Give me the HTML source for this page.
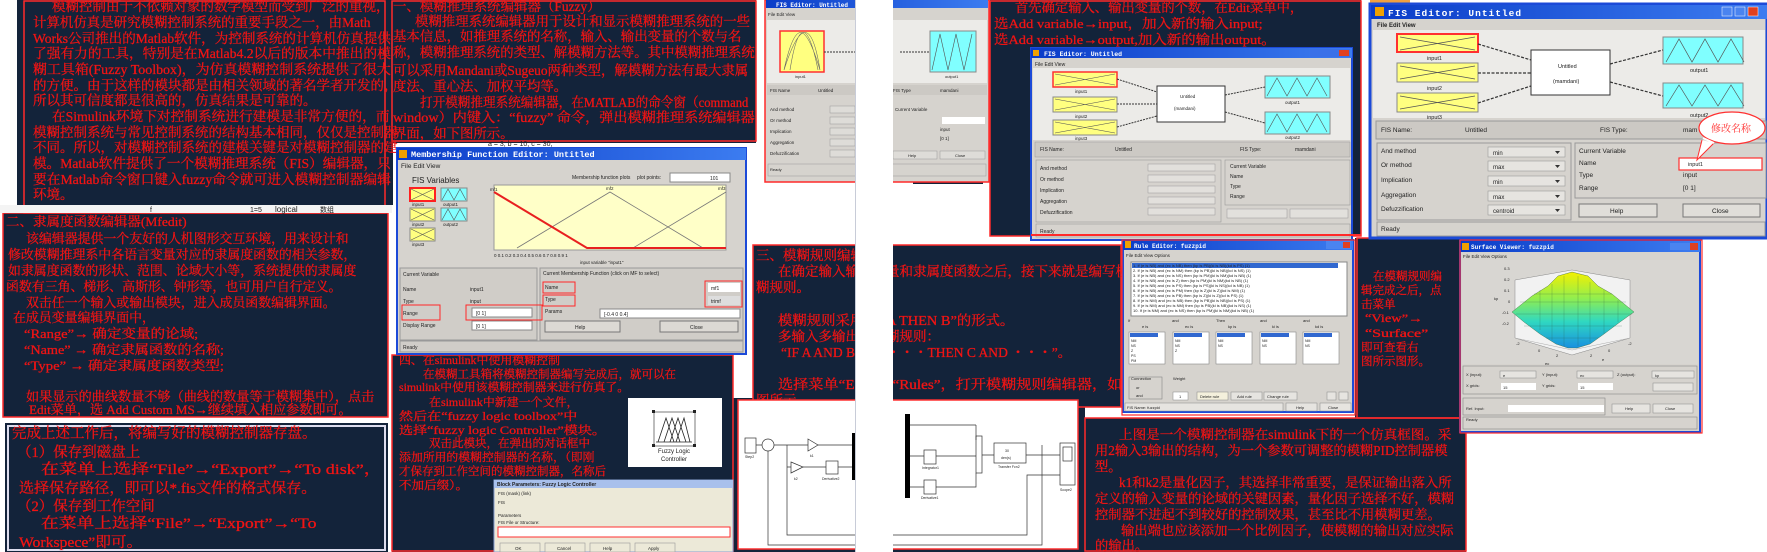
<!DOCTYPE html>
<html><head><meta charset="utf-8"><style>
html,body{margin:0;padding:0;background:#fff;width:1767px;height:552px;overflow:hidden}
svg{display:block}
.r text{fill:#f01414;stroke:#f01414;stroke-width:.3;font-family:"Liberation Serif","Noto Serif CJK SC",serif}
.w text{font-family:"Liberation Sans",sans-serif;fill:#222}
.tt{fill:#fff !important;font-family:"Liberation Mono",monospace !important;font-weight:bold}
</style></head><body>
<svg width="1767" height="552" viewBox="0 0 1767 552" xmlns="http://www.w3.org/2000/svg">
<defs>
<linearGradient id="tb" x1="0" x2="1"><stop offset="0" stop-color="#0a3cc8"/><stop offset="1" stop-color="#3c7cf0"/></linearGradient>
<linearGradient id="sf" x1="0" y1="0" x2="0" y2="1"><stop offset="0" stop-color="#f4f000"/><stop offset="0.35" stop-color="#90ee50"/><stop offset="0.65" stop-color="#30d8c0"/><stop offset="1" stop-color="#1890e0"/></linearGradient>
</defs>
<rect width="1767" height="552" fill="#fff"/>
<g fill="#13233a">
<rect x="17" y="0" width="376" height="205"/>
<rect x="392" y="0" width="364" height="143"/>
<rect x="3" y="213" width="385" height="204"/>
<rect x="5" y="423" width="383" height="129"/>
<rect x="392" y="355" width="341" height="197"/>
<rect x="990" y="0" width="371" height="236"/>
<rect x="753" y="245" width="368" height="162"/>
<rect x="733" y="398" width="352" height="154"/>
<rect x="1355" y="238" width="107" height="180"/>
<rect x="1085" y="418" width="381" height="134"/>
<rect x="913" y="170" width="70" height="14"/>
</g>
<rect x="8" y="426" width="377" height="124" fill="none" stroke="#dde" stroke-width="2"/>
<g fill="none" stroke="#ff2a2a" stroke-width="1.5">
<rect x="24" y="1" width="361" height="212"/>
<rect x="392" y="1" width="364" height="140"/>
<rect x="3" y="213" width="385" height="204"/>
<rect x="392" y="355" width="341" height="196"/>
<rect x="990" y="1" width="371" height="235"/>
<rect x="753" y="245" width="368" height="162"/>
<rect x="1357" y="238" width="106" height="180"/>
<rect x="1085" y="418" width="381" height="133"/>
</g>
<g class="w"><rect x="0" y="205" width="392" height="8" fill="#f4f4f4"/>
<text x="150" y="212" font-size="7" fill="#666">f</text><text x="250" y="212" font-size="7" fill="#666">1=5</text><text x="275" y="212" font-size="8" fill="#3030ff" font-family="Liberation Mono">logical</text><text x="320" y="212" font-size="7" fill="#666">数组</text>
<text x="488" y="146" font-size="7" fill="#888">a = 3; b = 10; c = 30;</text></g>

<g class="r" font-size="13.5">
<text class="t" x="52" y="11">模糊控制由于不依赖对象的数学模型而受到广泛的重视，</text>
<text class="t" x="33" y="27">计算机仿真是研究模糊控制系统的重要手段之一，由Math</text>
<text class="t" x="33" y="43">Works公司推出的Matlab软件，为控制系统的计算机仿真提供</text>
<text class="t" x="33" y="58">了强有力的工具，特别是在Matlab4.2以后的版本中推出的模</text>
<text class="t" x="33" y="74">糊工具箱(Fuzzy Toolbox)，为仿真模糊控制系统提供了很大</text>
<text class="t" x="33" y="90">的方便。由于这样的模块都是由相关领域的著名学者开发的，</text>
<text class="t" x="33" y="105">所以其可信度都是很高的，仿真结果是可靠的。</text>
<text class="t" x="52" y="121">在Simulink环境下对控制系统进行建模是非常方便的，而</text>
<text class="t" x="33" y="137">模糊控制系统与常见控制系统的结构基本相同，仅仅是控制器</text>
<text class="t" x="33" y="152">不同。所以，对模糊控制系统的建模关键是对模糊控制器的建</text>
<text class="t" x="33" y="168">模。Matlab软件提供了一个模糊推理系统（FIS）编辑器，只</text>
<text class="t" x="33" y="184">要在Matlab命令窗口键入fuzzy命令就可进入模糊控制器编辑</text>
<text class="t" x="33" y="199">环境。</text>
</g>
<g class="r" font-size="13.4">
<text class="t" x="393" y="11">一、模糊推理系统编辑器（Fuzzy）</text>
<text class="t" x="415" y="26">模糊推理系统编辑器用于设计和显示模糊推理系统的一些</text>
<text class="t" x="393" y="41">基本信息，如推理系统的名称，输入、输出变量的个数与名</text>
<text class="t" x="393" y="57">称，模糊推理系统的类型、解模糊方法等。其中模糊推理系统</text>
<text class="t" x="393" y="75">可以采用Mandani或Sugeuo两种类型，解模糊方法有最大隶属</text>
<text class="t" x="393" y="91">度法、重心法、加权平均等。</text>
<text class="t" x="420" y="107">打开模糊推理系统编辑器，在MATLAB的命令窗（command</text>
<text class="t" x="393" y="122">window）内键入：“fuzzy” 命令，弹出模糊推理系统编辑器</text>
<text class="t" x="393" y="138">界面，如下图所示。</text>
</g>
<g class="r" font-size="12.9">
<text class="t" x="6" y="226">二、隶属度函数编辑器(Mfedit)</text>
<text class="t" x="26" y="243">该编辑器提供一个友好的人机图形交互环境，用来设计和</text>
<text class="t" x="8" y="259">修改模糊推理系中各语言变量对应的隶属度函数的相关参数，</text>
<text class="t" x="8" y="275">如隶属度函数的形状、范围、论域大小等，系统提供的隶属度</text>
<text class="t" x="6" y="291">函数有三角、梯形、高斯形、钟形等，也可用户自行定义。</text>
<text class="t" x="26" y="307">双击任一个输入或输出模块，进入成员函数编辑界面。</text>
<text class="t" x="13" y="322">在成员变量编辑界面中，</text>
<text class="t" x="24" y="338">“Range”→ 确定变量的论域;</text>
<text class="t" x="24" y="354">“Name” → 确定隶属函数的名称;</text>
<text class="t" x="24" y="370">“Type” → 确定隶属度函数类型;</text>
<text class="t" x="26" y="401">如果显示的曲线数量不够（曲线的数量等于模糊集中），点击</text>
<text class="t" x="29" y="414">Edit菜单，选 Add Custom MS→继续填入相应参数即可。</text>
</g>
<g class="r" font-size="14.5">
<text class="t" x="12" y="438">完成上述工作后，将编写好的模糊控制器存盘。</text>
<text class="t" x="17" y="457">（1）保存到磁盘上</text>
<text class="t" x="41" y="474">在菜单上选择“File”→“Export”→“To disk”，</text>
<text class="t" x="19" y="493">选择保存路径，即可以*.fis文件的格式保存。</text>
<text class="t" x="17" y="511">（2）保存到工作空间</text>
<text class="t" x="41" y="528">在菜单上选择“File”→“Export”→“To</text>
<text class="t" x="19" y="547">Workspece”即可。</text>
</g>
<g class="r" font-size="11.5">
<text class="t" x="399" y="364">四、在simulink中使用模糊控制</text>
<text class="t" x="423" y="378">在模糊工具箱将模糊控制器编写完成后，就可以在</text>
<text class="t" x="399" y="391">simulink中使用该模糊控制器来进行仿真了。</text>
<text class="t" x="429" y="406">在simulink中新建一个文件，</text>
<text class="t" x="399" y="420">然后在“fuzzy logic toolbox”中</text>
<text class="t" x="399" y="434">选择“fuzzy logic Controller”模块。</text>
<text class="t" x="429" y="447">双击此模块，在弹出的对话框中</text>
<text class="t" x="399" y="461">添加所用的模糊控制器的名称，（即刚</text>
<text class="t" x="399" y="475">才保存到工作空间的模糊控制器，名称后</text>
<text class="t" x="399" y="489">不加后缀）。</text>
</g>
<g class="r" font-size="13.1">
<text class="t" x="1015" y="12">首先确定输入、输出变量的个数，在Edit菜单中，</text>
<text class="t" x="994" y="28">选Add variable→input，加入新的输入input;</text>
<text class="t" x="994" y="44">选Add variable→output,加入新的输出output。</text>
</g>
<g class="r" font-size="13.5">
<text class="t" x="756" y="260">三、模糊规则编辑器</text>
<text class="t" x="778" y="276">在确定输入输出变量和隶属度函数之后，接下来就是编写模</text>
<text class="t" x="756" y="292">糊规则。</text>
<text class="t" x="778" y="325">模糊规则采用“IF A THEN B”的形式。</text>
<text class="t" x="778" y="341">多输入多输出的模糊规则：</text>
<text class="t" x="781" y="357">“IF A AND B AND・・・THEN C AND ・・・”。</text>
<text class="t" x="778" y="389">选择菜单“Edit”→“Rules”，打开模糊规则编辑器，如</text>
<text class="t" x="756" y="405">图所示。</text>
</g>
<g class="r" font-size="11.5">
<text class="t" x="1373" y="280">在模糊规则编</text>
<text class="t" x="1361" y="294">辑完成之后，点</text>
<text class="t" x="1361" y="308">击菜单</text>
<text class="t" x="1365" y="322">“View”→</text>
<text class="t" x="1365" y="337">“Surface”</text>
<text class="t" x="1361" y="351">即可查看右</text>
<text class="t" x="1361" y="365">图所示图形。</text>
</g>
<g class="r" font-size="13.3">
<text class="t" x="1119" y="439">上图是一个模糊控制器在simulink下的一个仿真框图。采</text>
<text class="t" x="1095" y="455">用2输入3输出的结构，为一个参数可调整的模糊PID控制器模</text>
<text class="t" x="1095" y="471">型。</text>
<text class="t" x="1119" y="487">k1和k2是量化因子，其选择非常重要，是保证输出落入所</text>
<text class="t" x="1095" y="503">定义的输入变量的论域的关键因素，量化因子选择不好，模糊</text>
<text class="t" x="1095" y="519">控制器不进起不到较好的控制效果，甚至比不用模糊更差。</text>
<text class="t" x="1121" y="535">输出端也应该添加一个比例因子，使模糊的输出对应实际</text>
<text class="t" x="1095" y="550">的输出。</text>
</g>

<g class="w">
<rect x="397" y="148" width="349" height="206" fill="#d6d3ce" stroke="#1c4ad8" stroke-width="2"/>
<rect x="397" y="148" width="349" height="12" fill="url(#tb)"/>
<rect x="399" y="150" width="8" height="8" fill="#f0a000"/>
<text class="tt" x="411" y="157" font-size="8.5">Membership Function Editor: Untitled</text>
<text x="401" y="168" font-size="6.5" font-family="Liberation Mono">File  Edit  View</text>
<text x="412" y="183" font-size="8" fill="#444">FIS Variables</text>
<rect x="410" y="188" width="25" height="13" fill="#ffff80" stroke="#ff2020" stroke-width="2"/>
<rect x="441" y="188" width="26" height="13" fill="#80ffff" stroke="#888"/>
<rect x="410" y="208" width="25" height="13" fill="#ffff80" stroke="#888"/>
<rect x="441" y="208" width="26" height="13" fill="#80ffff" stroke="#888"/>
<rect x="410" y="228" width="25" height="13" fill="#ffff80" stroke="#888"/>
<path d="M411 189l23 11M411 200l23-11M442 200l6-11 6 11 6-11 6 11M411 209l23 11M411 220l23-11M442 220l6-11 6 11 6-11 6 11M411 229l23 11M411 240l23-11" stroke="#555" stroke-width=".6" fill="none"/>
<g font-size="4.5" fill="#555"><text x="412" y="206">input1</text><text x="443" y="206">output1</text><text x="412" y="226">input2</text><text x="443" y="226">output2</text><text x="412" y="246">input3</text></g>
<text x="572" y="179" font-size="5" fill="#444">Membership function plots</text>
<text x="637" y="179" font-size="5" fill="#444">plot points:</text>
<rect x="670" y="173" width="60" height="9" fill="#fff" stroke="#888"/><text x="710" y="180" font-size="5">101</text>
<rect x="494" y="185" width="232" height="65" fill="#ffffc8" stroke="#999"/>
<path d="M517 248L610 192L703 248M633 248L726 192" stroke="#777" stroke-width=".8" fill="none"/>
<path d="M494 192L587 248L726 248" stroke="#e82020" stroke-width="2" fill="none"/>
<g font-size="4.5" fill="#c00"><text x="490" y="191">mf1</text></g><g font-size="4.5" fill="#555"><text x="606" y="190">mf2</text><text x="718" y="190">mf3</text>
<text x="494" y="257">0   0.1   0.2   0.3   0.4   0.5   0.6   0.7   0.8   0.9   1</text>
<text x="580" y="264">input variable "input1"</text></g>
<rect x="400" y="268" width="137" height="72" fill="#d0cdc8" stroke="#999"/>
<rect x="540" y="268" width="203" height="72" fill="#d0cdc8" stroke="#999"/>
<g font-size="5" fill="#444"><text x="403" y="276">Current Variable</text><text x="403" y="291">Name</text><text x="470" y="291">input1</text><text x="403" y="303">Type</text><text x="470" y="303">input</text><text x="403" y="315">Range</text><text x="403" y="327">Display Range</text>
<text x="543" y="275">Current Membership Function (click on MF to select)</text><text x="545" y="289">Name</text><text x="545" y="301">Type</text><text x="545" y="313">Params</text></g>
<rect x="472" y="308" width="60" height="9" fill="#fff" stroke="#888"/><text x="476" y="315" font-size="5">[0 1]</text>
<rect x="472" y="321" width="60" height="9" fill="#fff" stroke="#888"/><text x="476" y="328" font-size="5">[0 1]</text>
<rect x="600" y="309" width="140" height="9" fill="#fff" stroke="#888"/><text x="604" y="316" font-size="5">[-0.4 0 0.4]</text>
<rect x="708" y="283" width="32" height="9" fill="#fff"/><text x="711" y="290" font-size="5">mf1</text>
<rect x="708" y="296" width="32" height="9" fill="#ddd"/><text x="711" y="303" font-size="5">trimf</text>
<g fill="none" stroke="#ff2828" stroke-width="1"><rect x="402" y="305" width="38" height="15"/><rect x="466" y="305" width="76" height="15"/><rect x="543" y="282" width="32" height="11"/><rect x="543" y="295" width="32" height="11"/><rect x="705" y="281" width="37" height="26"/></g>
<rect x="545" y="321" width="75" height="11" fill="#dcd9d4" stroke="#777"/><text x="575" y="329" font-size="5">Help</text>
<rect x="660" y="321" width="78" height="11" fill="#dcd9d4" stroke="#777"/><text x="690" y="329" font-size="5">Close</text>
<rect x="400" y="341" width="343" height="11" fill="#d0cdc8" stroke="#999"/><text x="403" y="349" font-size="5">Ready</text>
</g>

<g class="w">
<rect x="765" y="0" width="224" height="182" fill="#d6d3ce" stroke="#ff2a2a" stroke-width="1.5"/>
<rect x="766" y="0" width="222" height="8" fill="url(#tb)"/>
<text class="tt" x="776" y="7" font-size="6">FIS Editor: Untitled</text>
<text x="768" y="16" font-size="4.5" font-family="Liberation Mono">File  Edit  View</text>
<rect x="767" y="20" width="220" height="63" fill="#ecebe8"/>
<rect x="780" y="31" width="44" height="41" fill="#ffff80" stroke="#ff3030" stroke-width="1.5"/>
<path d="M784 70C795 20 805 20 820 70M784 70C800 20 812 20 820 70M790 70C798 20 808 20 818 70" stroke="#666" stroke-width=".6" fill="none"/>
<text x="795" y="78" font-size="4" fill="#d44">input1</text>
<path d="M824 52H855M900 52H930" stroke="#333" stroke-dasharray="2 1"/>
<rect x="930" y="31" width="46" height="41" fill="#80ffff" stroke="#888"/>
<path d="M932 70l8-36 8 36 8-36 8 36 8-36" stroke="#555" stroke-width=".6" fill="none"/>
<text x="945" y="78" font-size="4">output1</text>
<rect x="767" y="85" width="220" height="10" fill="#ccc9c4"/><g font-size="4.5"><text x="770" y="92">FIS Name</text><text x="818" y="92">Untitled</text><text x="893" y="92">FIS Type</text><text x="940" y="92">mamdani</text>
<text x="770" y="111">And method</text><text x="770" y="122">Or method</text><text x="770" y="133">Implication</text><text x="770" y="144">Aggregation</text><text x="770" y="155">Defuzzification</text>
<text x="895" y="111">Current Variable</text><text x="940" y="131">input</text><text x="940" y="140">[0 1]</text></g>
<g fill="#dedcd8" stroke="#999" stroke-width=".5"><rect x="830" y="106" width="25" height="7"/><rect x="830" y="117" width="25" height="7"/><rect x="830" y="128" width="25" height="7"/><rect x="830" y="139" width="25" height="7"/><rect x="830" y="150" width="25" height="7"/><rect x="893" y="151" width="44" height="8"/><rect x="940" y="151" width="45" height="8"/></g>
<rect x="942" y="117" width="43" height="7" fill="#fff"/>
<g font-size="4"><text x="908" y="157">Help</text><text x="955" y="157">Close</text><text x="770" y="171">Ready</text></g>
<rect x="768" y="164" width="218" height="12" fill="none" stroke="#999" stroke-width=".5"/>
</g>

<g class="w">
<rect x="1031" y="48" width="321" height="192" fill="#d6d3ce" stroke="#1c4ad8" stroke-width="2"/>
<rect x="1031" y="48" width="321" height="10" fill="url(#tb)"/>
<rect x="1033" y="50" width="6" height="6" fill="#f0a000"/>
<text class="tt" x="1044" y="56" font-size="6.5">FIS Editor: Untitled</text>
<rect x="1310" y="49" width="40" height="8" fill="#3a70e8"/><rect x="1339" y="50" width="10" height="6" fill="#e04020"/>
<text x="1035" y="66" font-size="5" font-family="Liberation Mono">File  Edit  View</text>
<rect x="1033" y="68" width="317" height="72" fill="#ecebe8"/>
<g stroke="#888"><rect x="1053" y="72" width="64" height="15" fill="#ffff80" stroke="#ff3030" stroke-width="1.5"/><rect x="1053" y="97" width="64" height="15" fill="#ffff80"/><rect x="1053" y="120" width="64" height="15" fill="#ffff80"/>
<rect x="1157" y="86" width="68" height="36" fill="#fff" stroke="#333"/>
<rect x="1265" y="76" width="65" height="22" fill="#80ffff"/><rect x="1265" y="112" width="65" height="22" fill="#80ffff"/></g>
<path d="M1055 74l60 11M1055 85l60-11M1055 99l60 11M1055 110l60-11M1055 122l60 11M1055 133l60-11M1267 96l10-18 10 18 10-18 10 18 10-18 10 18M1267 132l10-18 10 18 10-18 10 18 10-18 10 18" stroke="#555" stroke-width=".6" fill="none"/>
<path d="M1117 79L1157 92M1117 104H1157M1117 127L1157 116M1225 95L1265 87M1225 112L1265 123" stroke="#333" stroke-dasharray="2 1"/>
<g font-size="4.5" fill="#555"><text x="1075" y="93" fill="#d44">input1</text><text x="1075" y="118">input2</text><text x="1075" y="140">input3</text><text x="1180" y="98">Untitled</text><text x="1174" y="110">(mamdani)</text><text x="1285" y="104">output1</text><text x="1285" y="139">output2</text></g>
<rect x="1035" y="142" width="315" height="15" fill="#ccc9c4" stroke="#999" stroke-width=".5"/>
<g font-size="5"><text x="1040" y="151">FIS Name:</text><text x="1115" y="151">Untitled</text><text x="1240" y="151">FIS Type:</text><text x="1295" y="151">mamdani</text>
<text x="1040" y="170">And method</text><text x="1040" y="181">Or method</text><text x="1040" y="192">Implication</text><text x="1040" y="203">Aggregation</text><text x="1040" y="214">Defuzzification</text>
<text x="1230" y="168">Current Variable</text><text x="1230" y="178">Name</text><text x="1230" y="188">Type</text><text x="1230" y="198">Range</text></g>
<rect x="1036" y="160" width="185" height="62" fill="none" stroke="#999" stroke-width=".6"/>
<rect x="1225" y="160" width="125" height="45" fill="none" stroke="#999" stroke-width=".6"/>
<g fill="#e2e0dc" stroke="#999" stroke-width=".5"><rect x="1148" y="164" width="67" height="7"/><rect x="1148" y="175" width="67" height="7"/><rect x="1148" y="186" width="67" height="7"/><rect x="1148" y="197" width="67" height="7"/><rect x="1148" y="208" width="67" height="7"/><rect x="1227" y="209" width="60" height="9"/><rect x="1290" y="209" width="58" height="9"/></g>
<rect x="1036" y="224" width="314" height="13" fill="none" stroke="#999" stroke-width=".6"/><text x="1040" y="233" font-size="5">Ready</text>
</g>
<rect x="1031" y="234" width="330" height="2" fill="#ff2a2a"/>

<g class="w">
<rect x="1370" y="0" width="40" height="6" fill="#f0a040"/>
<rect x="1370" y="4" width="397" height="234" fill="#d6d3ce" stroke="#1c4ad8" stroke-width="3"/>
<rect x="1371" y="5" width="396" height="14" fill="url(#tb)"/>
<rect x="1375" y="7" width="9" height="9" fill="#f0a000"/>
<text class="tt" x="1388" y="16" font-size="9.5" letter-spacing="1">FIS Editor: Untitled</text>
<rect x="1722" y="7" width="10" height="9" fill="#4a84f0" stroke="#fff" stroke-width=".5"/><rect x="1735" y="7" width="10" height="9" fill="#4a84f0" stroke="#fff" stroke-width=".5"/><rect x="1748" y="7" width="10" height="9" fill="#e04020" stroke="#fff" stroke-width=".5"/>
<text x="1377" y="27" font-size="6" font-family="Liberation Mono" font-weight="bold">File  Edit  View</text>
<rect x="1373" y="30" width="392" height="88" fill="#ecebe8"/>
<g stroke="#888"><rect x="1397" y="34" width="81" height="18" fill="#ffff80" stroke="#ff3030" stroke-width="2"/><rect x="1397" y="63" width="81" height="19" fill="#ffff80"/><rect x="1397" y="93" width="81" height="19" fill="#ffff80"/>
<rect x="1531" y="50" width="79" height="45" fill="#fff" stroke="#333"/>
<rect x="1663" y="37" width="80" height="27" fill="#80ffff"/><rect x="1663" y="83" width="80" height="25" fill="#80ffff"/></g>
<path d="M1400 37l75 13M1400 50l75-13M1400 66l75 13M1400 79l75-13M1400 96l75 13M1400 109l75-13M1666 62l13-23 13 23 13-23 13 23 13-23 13 23M1666 106l13-21 13 21 13-21 13 21 13-21 13 21" stroke="#555" stroke-width=".7" fill="none"/>
<path d="M1478 44L1531 60M1478 73H1531M1478 103L1531 86M1610 64L1663 50M1610 82L1663 96" stroke="#333" stroke-dasharray="3 1.5" stroke-width="1.2"/>
<g font-size="5.5" fill="#666"><text x="1427" y="60" fill="#e04040">input1</text><text x="1427" y="90">input2</text><text x="1427" y="119">input3</text><text x="1558" y="68">Untitled</text><text x="1553" y="83">(mamdani)</text><text x="1690" y="72">output1</text><text x="1690" y="117">output2</text></g>
<rect x="1376" y="121" width="390" height="18" fill="#ccc9c4" stroke="#999"/>
<g font-size="6.5" fill="#333"><text x="1381" y="132">FIS Name:</text><text x="1465" y="132">Untitled</text><text x="1600" y="132">FIS Type:</text><text x="1683" y="132">mam</text>
<text x="1381" y="153">And method</text><text x="1381" y="167">Or method</text><text x="1381" y="182">Implication</text><text x="1381" y="197">Aggregation</text><text x="1381" y="211">Defuzzification</text>
<text x="1579" y="153">Current Variable</text><text x="1579" y="165">Name</text><text x="1579" y="177">Type</text><text x="1579" y="190">Range</text><text x="1683" y="177">input</text><text x="1683" y="190">[0 1]</text></g>
<rect x="1377" y="143" width="194" height="77" fill="none" stroke="#999"/>
<rect x="1575" y="143" width="191" height="55" fill="none" stroke="#999"/>
<g fill="#e6e4e0" stroke="#999" stroke-width=".6"><rect x="1488" y="147" width="77" height="10"/><rect x="1488" y="161" width="77" height="10"/><rect x="1488" y="176" width="77" height="10"/><rect x="1488" y="191" width="77" height="10"/><rect x="1488" y="205" width="77" height="10"/></g>
<g font-size="6"><text x="1493" y="155">min</text><text x="1493" y="169">max</text><text x="1493" y="184">min</text><text x="1493" y="199">max</text><text x="1493" y="213">centroid</text></g>
<g fill="#333"><path d="M1555 151h5l-2.5 3z"/><path d="M1555 165h5l-2.5 3z"/><path d="M1555 180h5l-2.5 3z"/><path d="M1555 195h5l-2.5 3z"/><path d="M1555 209h5l-2.5 3z"/></g>
<rect x="1679" y="158" width="83" height="12" fill="#fff" stroke="#ff3030" stroke-width="1.2"/><text x="1688" y="166" font-size="5.5">input1</text>
<rect x="1579" y="204" width="78" height="13" fill="#e0ded9" stroke="#777"/><text x="1610" y="213" font-size="6.5">Help</text>
<rect x="1683" y="204" width="77" height="13" fill="#e0ded9" stroke="#777"/><text x="1712" y="213" font-size="6.5">Close</text>
<rect x="1377" y="222" width="388" height="14" fill="none" stroke="#999"/><text x="1381" y="231" font-size="6.5">Ready</text>
</g>
<path d="M1702 140L1697 160L1714 143" fill="#fff" stroke="#ff3030"/>
<ellipse cx="1732" cy="128" rx="33" ry="16" fill="#fff" stroke="#ff3030" stroke-width="1.2"/>
<path d="M1703 138L1714 143" stroke="#fff" stroke-width="2"/>
<text x="1711" y="132" font-size="10" fill="#ff3030" font-family="Noto Serif CJK SC,serif">修改名称</text>

<g class="w">
<rect x="1123" y="240" width="230" height="172" fill="#d6d3ce" stroke="#1c4ad8" stroke-width="2"/>
<rect x="1123" y="240" width="230" height="10" fill="url(#tb)"/>
<rect x="1125" y="241" width="6" height="7" fill="#f0a000"/>
<text class="tt" x="1134" y="248" font-size="6">Rule Editor: fuzzpid</text>
<rect x="1326" y="241" width="25" height="8" fill="#4a84f0"/><rect x="1343" y="242" width="7" height="6" fill="#e04020"/>
<text x="1126" y="257" font-size="4.5" font-family="Liberation Mono">File  Edit  View  Options</text>
<rect x="1131" y="262" width="216" height="54" fill="#fff" stroke="#888"/>
<rect x="1132" y="263" width="206" height="5" fill="#3168d0"/>
<g font-size="4" fill="#333">
<text x="1133" y="267" fill="#fff">1. If (e is NB) and (ec is NB) then (kp is PB)(ki is NB)(kd is PS) (1)</text>
<text x="1133" y="272">2. If (e is NB) and (ec is NM) then (kp is PB)(ki is NB)(kd is NS) (1)</text>
<text x="1133" y="277">3. If (e is NB) and (ec is NS) then (kp is PM)(ki is NM)(kd is NB) (1)</text>
<text x="1133" y="282">4. If (e is NB) and (ec is Z) then (kp is PM)(ki is NM)(kd is NB) (1)</text>
<text x="1133" y="287">5. If (e is NB) and (ec is PS) then (kp is PS)(ki is NS)(kd is NB) (1)</text>
<text x="1133" y="292">6. If (e is NB) and (ec is PM) then (kp is Z)(ki is Z)(kd is NM) (1)</text>
<text x="1133" y="297">7. If (e is NB) and (ec is PB) then (kp is Z)(ki is Z)(kd is PS) (1)</text>
<text x="1133" y="302">8. If (e is NM) and (ec is NB) then (kp is PB)(ki is NB)(kd is PS) (1)</text>
<text x="1133" y="307">9. If (e is NM) and (ec is NM) then (kp is PB)(ki is NB)(kd is NS) (1)</text>
<text x="1133" y="312">10. If (e is NM) and (ec is NS) then (kp is PM)(ki is NM)(kd is NB) (1)</text>
<text x="1128" y="322">If</text><text x="1172" y="322">and</text><text x="1216" y="322">Then</text><text x="1260" y="322">and</text><text x="1303" y="322">and</text>
<text x="1142" y="328">e is</text><text x="1185" y="328">ec is</text><text x="1228" y="328">kp is</text><text x="1272" y="328">ki is</text><text x="1315" y="328">kd is</text>
</g>
<g fill="#fff" stroke="#888" stroke-width=".6"><rect x="1129" y="332" width="36" height="32"/><rect x="1173" y="332" width="36" height="32"/><rect x="1216" y="332" width="36" height="32"/><rect x="1260" y="332" width="36" height="32"/><rect x="1303" y="332" width="36" height="32"/></g>
<g fill="#3168d0"><rect x="1130" y="333" width="28" height="4"/><rect x="1174" y="333" width="28" height="4"/><rect x="1217" y="333" width="28" height="4"/><rect x="1261" y="333" width="28" height="4"/><rect x="1304" y="333" width="28" height="4"/></g>
<g font-size="3.5" fill="#333"><text x="1131" y="342">NM</text><text x="1131" y="347">NS</text><text x="1131" y="352">Z</text><text x="1131" y="357">PS</text><text x="1131" y="362">PM</text><text x="1175" y="342">NM</text><text x="1175" y="347">NS</text><text x="1175" y="352">Z</text><text x="1218" y="342">NM</text><text x="1218" y="347">NS</text><text x="1262" y="342">NM</text><text x="1262" y="347">NS</text><text x="1305" y="342">NM</text><text x="1305" y="347">NS</text></g>
<rect x="1129" y="377" width="33" height="22" fill="none" stroke="#888" stroke-width=".6"/>
<g font-size="4"><text x="1131" y="380">Connection</text><text x="1173" y="380">Weight</text><text x="1136" y="389">or</text><text x="1136" y="397">and</text></g>
<g fill="#e6e4e0" stroke="#888" stroke-width=".5"><rect x="1173" y="392" width="15" height="8" fill="#fff"/><rect x="1197" y="392" width="31" height="8" fill="#f4f0dc"/><rect x="1231" y="392" width="31" height="8"/><rect x="1264" y="392" width="33" height="8"/><rect x="1327" y="392" width="9" height="8"/><rect x="1339" y="392" width="9" height="8"/><rect x="1125" y="403" width="158" height="8"/><rect x="1286" y="403" width="31" height="8"/><rect x="1320" y="403" width="31" height="8"/></g>
<g font-size="4"><text x="1179" y="398">1</text><text x="1200" y="398">Delete rule</text><text x="1237" y="398">Add rule</text><text x="1267" y="398">Change rule</text><text x="1127" y="409">FIS Name: fuzzpid</text><text x="1296" y="409">Help</text><text x="1328" y="409">Close</text></g>
</g>
<rect x="1122" y="240" width="233" height="175" fill="none" stroke="#ff2a2a" stroke-width="1.2"/>

<g class="w">
<rect x="1460" y="241" width="240" height="191" fill="#d6d3ce" stroke="#1c4ad8" stroke-width="2"/>
<rect x="1460" y="241" width="240" height="11" fill="url(#tb)"/>
<rect x="1462" y="243" width="7" height="7" fill="#f0a000"/>
<text class="tt" x="1471" y="249" font-size="6">Surface Viewer: fuzzpid</text>
<rect x="1670" y="243" width="28" height="7" fill="#4a84f0"/><rect x="1690" y="243" width="8" height="7" fill="#e04020"/>
<text x="1463" y="258" font-size="4.5" font-family="Liberation Mono">File  Edit  View  Options</text>
<rect x="1462" y="260" width="236" height="104" fill="#d8d6d2"/>
<path d="M1515 280L1572 270L1630 280V338L1572 355L1515 338Z" fill="#f2f2f2" stroke="#888" stroke-width=".5"/>
<path d="M1515 338L1572 350M1572 350L1630 338" stroke="#aaa" stroke-width=".5" fill="none"/>
<path d="M1572 272L1588 276L1598 286L1612 294L1634 312L1620 322L1604 334L1590 344L1577 348L1568 348L1556 344L1540 334L1524 322L1512 312L1532 296L1548 286L1558 276Z" fill="url(#sf)" stroke="#3a6a3a" stroke-width=".4"/>
<path d="M1540 290V330M1552 284V340M1564 276V346M1578 276V346M1590 282V342M1604 290V334M1618 300V322M1520 302H1626M1516 314H1632M1524 326H1622M1534 294H1612M1546 338H1598" stroke="#2a5a40" stroke-width=".35" fill="none" opacity=".6"/>
<g font-size="4" fill="#333"><text x="1504" y="270">0.3</text><text x="1504" y="281">0.2</text><text x="1504" y="292">0.1</text><text x="1508" y="303">0</text><text x="1502" y="314">-0.1</text><text x="1502" y="325">-0.2</text><text x="1494" y="300">kp</text><text x="1516" y="345">-2</text><text x="1538" y="352">0</text><text x="1556" y="357">2</text><text x="1590" y="357">2</text><text x="1608" y="352">0</text><text x="1628" y="345">-2</text><text x="1545" y="365">ec</text><text x="1602" y="361">e</text></g>
<rect x="1463" y="366" width="234" height="28" fill="none" stroke="#888" stroke-width=".6"/>
<g font-size="4"><text x="1466" y="376">X (input):</text><text x="1542" y="376">Y (input):</text><text x="1617" y="376">Z (output):</text><text x="1466" y="387">X grids:</text><text x="1542" y="387">Y grids:</text><text x="1466" y="410">Ref. Input:</text><text x="1466" y="421">Ready</text></g>
<g fill="#e6e4e0" stroke="#888" stroke-width=".5"><rect x="1500" y="371" width="36" height="7"/><rect x="1577" y="371" width="36" height="7"/><rect x="1652" y="371" width="42" height="7"/><rect x="1653" y="383" width="40" height="8"/><rect x="1612" y="404" width="38" height="9"/><rect x="1653" y="404" width="40" height="9"/></g>
<g fill="#fff"><rect x="1501" y="383" width="35" height="7"/><rect x="1578" y="383" width="35" height="7"/><rect x="1508" y="405" width="96" height="7"/></g>
<g font-size="4"><text x="1503" y="389">15</text><text x="1580" y="389">15</text><text x="1625" y="410">Help</text><text x="1665" y="410">Close</text><text x="1503" y="377">e</text><text x="1580" y="377">ec</text><text x="1655" y="377">kp</text></g>
<rect x="1463" y="398" width="142" height="17" fill="none" stroke="#888" stroke-width=".6"/>
<rect x="1463" y="417" width="234" height="12" fill="none" stroke="#888" stroke-width=".6"/>
</g>
<rect x="1460" y="240" width="242" height="193" fill="none" stroke="#ff2a2a" stroke-width="1.2"/>

<g class="w">
<rect x="738" y="400" width="340" height="149" fill="#fff" stroke="#ff3030" stroke-width="1.5"/>
<g stroke="#333" stroke-width=".7" fill="none">
<rect x="745" y="438" width="11" height="15"/>
<circle cx="768" cy="445" r="6"/>
<path d="M756 445H762M774 445H808M787 445V467H791M803 467H826M838 467H852M818 445H852M768 451V545H1042V445M787 467V535H1027V475H1060"/>
<path d="M808 439L818 445L808 451Z"/><path d="M791 462L803 467L791 473Z"/>
<rect x="826" y="461" width="12" height="13"/>
<path d="M907 425H976M907 456H924M936 456H976M907 487H924M936 487H976V473M976 425V440M982 455H994M1026 455H1060"/>
<rect x="924" y="450" width="12" height="14"/><rect x="924" y="480" width="12" height="14"/>
<rect x="976" y="436" width="6" height="37"/>
<rect x="994" y="443" width="32" height="20"/>
<rect x="1060" y="443" width="15" height="42"/><rect x="1063" y="447" width="9" height="14"/>
</g>
<rect x="852" y="433" width="4" height="47" fill="#000"/>
<rect x="905" y="414" width="5" height="84" fill="#000"/>
<g font-size="3.5" fill="#555"><text x="745" y="458">Step2</text><text x="810" y="457">k1</text><text x="794" y="480">k2</text><text x="822" y="480">Derivative2</text><text x="922" y="469">Integrator1</text><text x="921" y="499">Derivative1</text><text x="998" y="468">Transfer Fcn2</text><text x="1060" y="491">Scope2</text><text x="1005" y="452">30</text><text x="1001" y="459">den(s)</text></g>
</g>

<g class="w">
<rect x="628" y="398" width="94" height="69" fill="#fff"/>
<rect x="654" y="412" width="41" height="34" fill="none" stroke="#444" stroke-width=".7"/>
<g fill="#222"><rect x="652" y="410" width="3" height="3"/><rect x="693" y="410" width="3" height="3"/><rect x="652" y="444" width="3" height="3"/><rect x="693" y="444" width="3" height="3"/></g>
<path d="M658 442L666 418L674 442M664 442L672 418L680 442M670 442L678 418L686 442M676 442L684 418L690 442M656 442H692" stroke="#222" stroke-width=".8" fill="none"/>
<text x="658" y="453" font-size="6" fill="#444">Fuzzy Logic</text><text x="661" y="461" font-size="6" fill="#444">Controller</text>
</g>

<g class="w">
<rect x="494" y="480" width="239" height="72" fill="#ece9d8" stroke="#8aa0d0"/>
<rect x="494" y="480" width="239" height="8" fill="#a8c0ec"/>
<text x="497" y="486" font-size="5" font-family="Liberation Mono" font-weight="bold" fill="#fff">Block Parameters: Fuzzy Logic Controller</text>
<g font-size="4.5" font-family="Liberation Mono"><text x="498" y="495">FIS (mask) (link)</text><text x="498" y="504">FIS</text><text x="498" y="517">Parameters</text><text x="498" y="524">FIS File or Structure:</text></g>
<rect x="498" y="527" width="232" height="10" fill="#fff" stroke="#ff3030"/>
<g fill="#ece9d8" stroke="#999" stroke-width=".6"><rect x="500" y="543" width="40" height="9"/><rect x="545" y="543" width="40" height="9"/><rect x="590" y="543" width="40" height="9"/><rect x="635" y="543" width="40" height="9"/></g>
<g font-size="4.5"><text x="515" y="550">OK</text><text x="557" y="550">Cancel</text><text x="603" y="550">Help</text><text x="648" y="550" fill="#999">Apply</text></g>
</g>

<rect x="855" y="0" width="38" height="552" fill="#fff"/>
<rect x="855" y="0" width="1" height="552" fill="#c8ccd8"/>
</svg>
<script>
document.querySelectorAll('text.t').forEach(function(el){
 var fs=parseFloat(getComputedStyle(el).fontSize)||13;
 var u=0,s=el.textContent;
 for(var i=0;i<s.length;i++){u+=s.charCodeAt(i)>0x2000?1:0.5;}
 el.setAttribute('textLength',(u*fs).toFixed(1));
 el.setAttribute('lengthAdjust','spacingAndGlyphs');
});
</script>
</body></html>
